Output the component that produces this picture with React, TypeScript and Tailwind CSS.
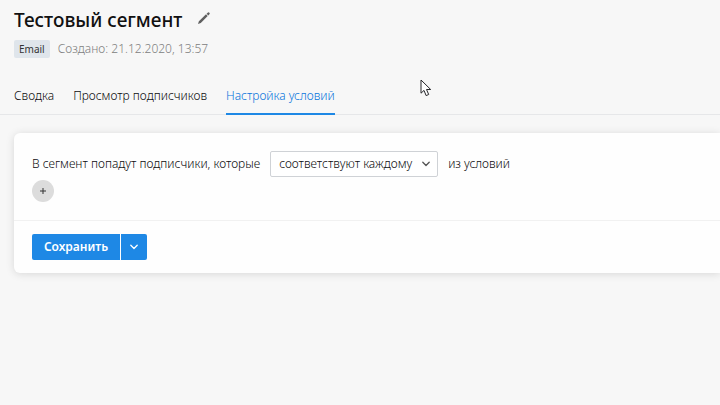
import { useState } from "react";

const tabs = ["Сводка", "Просмотр подписчиков", "Настройка условий"];

function Chevron({ className }: { className: string }) {
  return (
    <svg viewBox="0 0 8 6" className={className} fill="none" stroke="currentColor" strokeWidth="1.3" strokeLinecap="round" strokeLinejoin="round" aria-hidden="true">
      <path d="M.8 1.2 4 4.5 7.2 1.2" />
    </svg>
  );
}

function Cursor() {
  return (
    <svg viewBox="0 0 12 18" className="pointer-events-none absolute top-[79px] left-[420px] h-[18px] w-3" aria-hidden="true">
      <path d="M1 1V14.2L4 11.4 6.1 16.6 8.7 15.5 6.5 10.5H10.7Z" fill="#fff" stroke="#27272b" strokeWidth="1" strokeLinejoin="round" />
    </svg>
  );
}

export default function App() {
  const [active, setActive] = useState(2);
  return (
    <div className="relative min-h-screen overflow-hidden bg-[#f7f7f7] font-['Noto_Sans','Open_Sans',sans-serif] text-xs font-light text-[#0c0c0e]">
      <header className="px-[14px] pt-[6px]">
        <div className="flex items-center gap-4">
          <h1 className="text-[19px] leading-7 font-medium text-[#111]">Тестовый сегмент</h1>
          <button type="button" aria-label="Переименовать" className="mb-1 text-[#606060]">
            <svg viewBox="0 0 12 12" className="size-3" fill="currentColor" aria-hidden="true">
              <path d="M0 12 .9 9.2 8 2.3 9.7 4 2.8 11.1ZM8.6 1.7 10 .4Q10.5 0 11 .4L11.6 1Q12 1.5 11.6 2L10.3 3.4Z" />
            </svg>
          </button>
        </div>
        <div className="mt-[6px] flex items-center gap-2">
          <span className="rounded-xs bg-[#dfe5eb] px-[5px] text-[10px] leading-[18px] font-normal text-[#333]">Email</span>
          <span className="leading-[18px] text-[#808080]">Создано: 21.12.2020, 13:57</span>
        </div>
      </header>
      <nav className="mt-7 flex gap-[19px] border-b border-[#e6e7e9] px-[14px]">
        {tabs.map((tab, i) => (
          <button
            key={tab}
            type="button"
            onClick={() => setActive(i)}
            className={`-mb-px border-b-2 pb-[7px] leading-5 whitespace-nowrap ${i === active ? "border-[#1e88e5] text-[#0875dc]" : "border-transparent"}`}
          >
            {tab}
          </button>
        ))}
      </nav>
      <main className="pt-[18px] pl-[14px]">
        <form className="rounded-l-md bg-[#fefefe] shadow-[0_1px_8px_rgba(0,0,0,0.13)]" onSubmit={(e) => e.preventDefault()}>
          <div className="px-[18px] pt-[18px] pb-[18px]">
            <div className="flex items-center gap-[10px] whitespace-nowrap">
              <label htmlFor="match">В сегмент попадут подписчики, которые</label>
              <div className="relative">
                <select id="match" className="h-[26px] w-[168px] appearance-none rounded-xs border border-[#cfd2d6] bg-white pr-5 pl-2">
                  <option>соответствуют каждому</option>
                  <option>соответствуют любому</option>
                </select>
                <Chevron className="pointer-events-none absolute top-[10px] right-2 h-[6px] w-2 text-[#555]" />
              </div>
              <span>из условий</span>
            </div>
            <button type="button" aria-label="Добавить условие" className="mt-[3px] flex size-[22px] items-center justify-center rounded-full bg-[#dcdcdc] text-[#333]">
              <svg viewBox="0 0 6 6" className="size-[6px]" stroke="currentColor" strokeWidth="1" aria-hidden="true">
                <path d="M3 0V6M0 3H6" />
              </svg>
            </button>
          </div>
          <div className="flex gap-px border-t border-[#f1f1f1] px-[18px] py-[13px] text-white">
            <button type="submit" className="h-[26px] w-[88px] rounded-l-xs bg-[#1e88e5] font-semibold">Сохранить</button>
            <button type="button" aria-label="Другие действия" className="flex h-[26px] w-[26px] items-center justify-center rounded-r-xs bg-[#1e88e5]">
              <Chevron className="h-[6px] w-2" />
            </button>
          </div>
        </form>
      </main>
      <Cursor />
    </div>
  );
}
